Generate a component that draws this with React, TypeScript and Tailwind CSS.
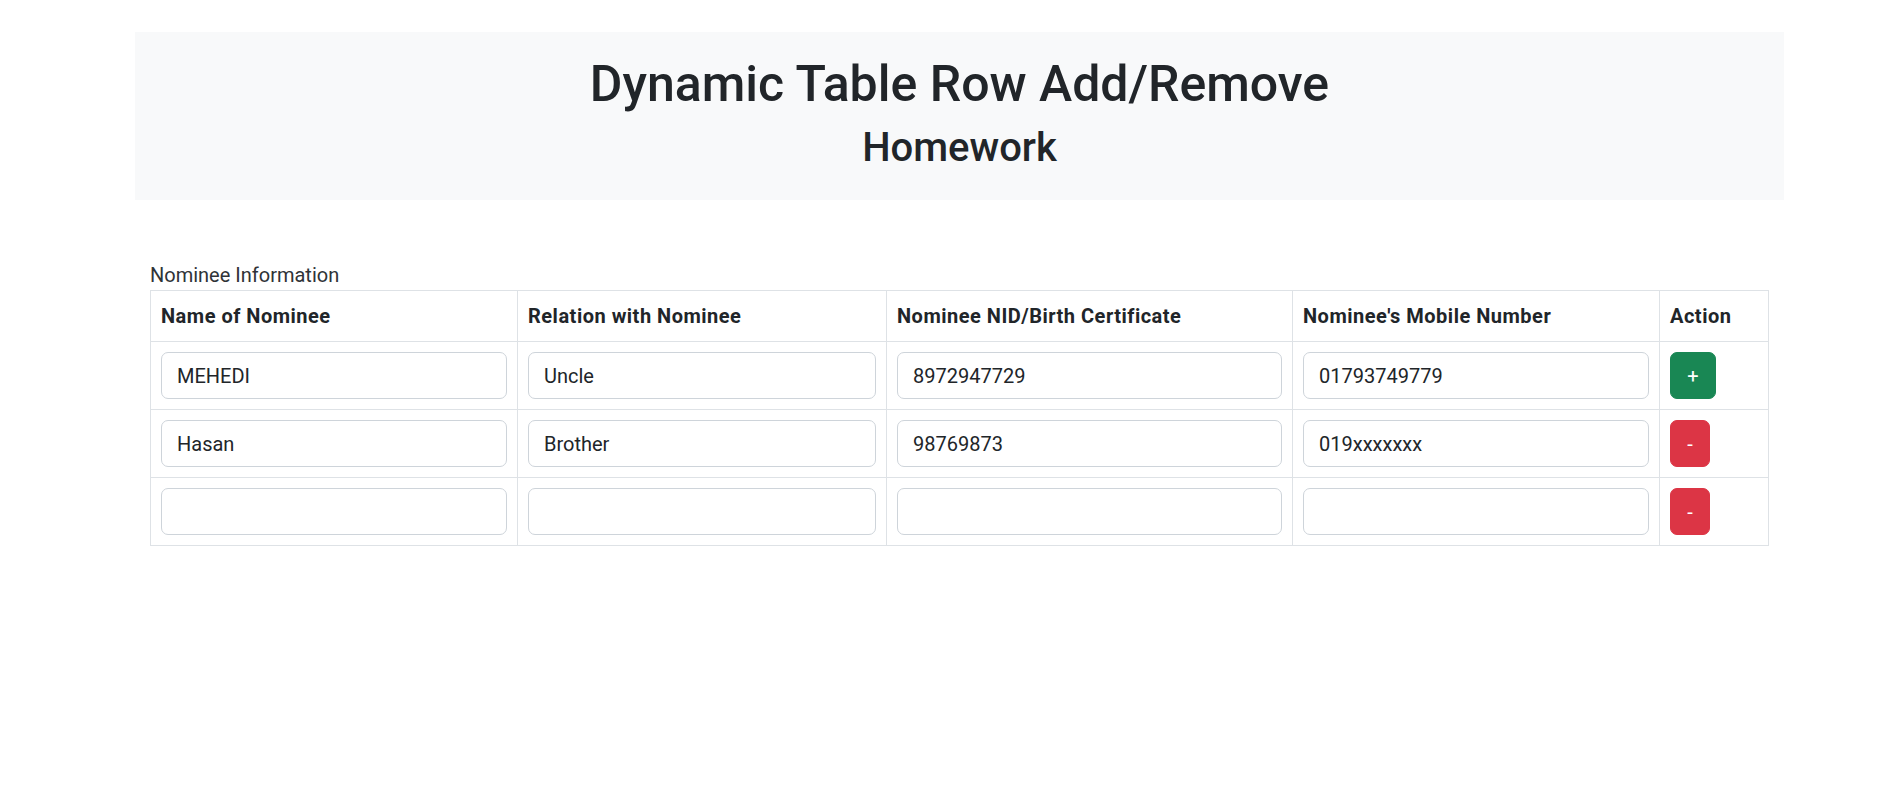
import { useState } from "react";

type Nominee = {
  name: string;
  relation: string;
  nid: string;
  mobile: string;
};

const initialRows: Nominee[] = [
  { name: "MEHEDI", relation: "Uncle", nid: "8972947729", mobile: "01793749779" },
  { name: "Hasan", relation: "Brother", nid: "98769873", mobile: "019xxxxxxx" },
  { name: "", relation: "", nid: "", mobile: "" },
];

const inputClass =
  "block w-full h-[47px] px-[15px] py-[7px] text-[20px] leading-[30px] text-[#212529] bg-white border border-[#ced4da] rounded-[7px] outline-none focus:border-[#86b7fe]";

const cellClass = "border border-[#dee2e6] p-[10px] align-top";
const headClass = "border border-[#dee2e6] p-[10px] text-left font-bold tracking-[0.5px]";

const App = () => {
  const [rows, setRows] = useState<Nominee[]>(initialRows);

  const addRow = () => {
    setRows([...rows, { name: "", relation: "", nid: "", mobile: "" }]);
  };

  const removeRow = (index: number) => {
    setRows(rows.filter((_, i) => i !== index));
  };

  const updateRow = (index: number, field: keyof Nominee, value: string) => {
    setRows(rows.map((row, i) => (i === index ? { ...row, [field]: value } : row)));
  };

  return (
    <div
      className="min-h-screen bg-white text-[#212529] text-[20px] leading-[30px]"
      style={{ fontFamily: "Roboto, 'Noto Sans', sans-serif" }}
    >
      {/* header */}
      <div className="ml-[135px] w-[1649px] mt-[32px] bg-[#f8f9fa] pt-[22px] pb-[18px] text-center">
        <h1 className="text-[50px] leading-[60px] font-medium mb-[10px]">
          Dynamic Table Row Add/Remove
        </h1>
        <h2 className="text-[40px] leading-[48px] font-medium mb-[10px]">Homework</h2>
      </div>

      {/* table */}
      <div className="ml-[135px] w-[1649px] px-[15px] mt-[50px]">
        <table className="w-full border-collapse">
          <caption className="text-left pt-[10px] pb-0 text-[#2f3337]">
            Nominee Information
          </caption>
          <thead>
            <tr>
              <th className={`w-[367px] ${headClass}`}>Name of Nominee</th>
              <th className={`w-[369px] ${headClass}`}>Relation with Nominee</th>
              <th className={`w-[406px] ${headClass}`}>Nominee NID/Birth Certificate</th>
              <th className={`w-[367px] ${headClass}`}>Nominee's Mobile Number</th>
              <th className={headClass}>Action</th>
            </tr>
          </thead>
          <tbody>
            {rows.map((row, i) => (
              <tr key={i}>
                <td className={cellClass}>
                  <input
                    className={inputClass}
                    value={row.name}
                    onChange={(e) => updateRow(i, "name", e.target.value)}
                  />
                </td>
                <td className={cellClass}>
                  <input
                    className={inputClass}
                    value={row.relation}
                    onChange={(e) => updateRow(i, "relation", e.target.value)}
                  />
                </td>
                <td className={cellClass}>
                  <input
                    className={inputClass}
                    value={row.nid}
                    onChange={(e) => updateRow(i, "nid", e.target.value)}
                  />
                </td>
                <td className={cellClass}>
                  <input
                    className={inputClass}
                    value={row.mobile}
                    onChange={(e) => updateRow(i, "mobile", e.target.value)}
                  />
                </td>
                <td className={cellClass}>
                  {i === 0 ? (
                    <button
                      onClick={addRow}
                      className="h-[47px] w-[46px] rounded-[7px] bg-[#198754] border border-[#198754] text-white text-[20px] leading-[30px]"
                    >
                      +
                    </button>
                  ) : (
                    <button
                      onClick={() => removeRow(i)}
                      className="h-[47px] w-[40px] rounded-[7px] bg-[#dc3545] border border-[#dc3545] text-white text-[20px] leading-[30px]"
                    >
                      -
                    </button>
                  )}
                </td>
              </tr>
            ))}
          </tbody>
        </table>
      </div>
    </div>
  );
};

export default App;
